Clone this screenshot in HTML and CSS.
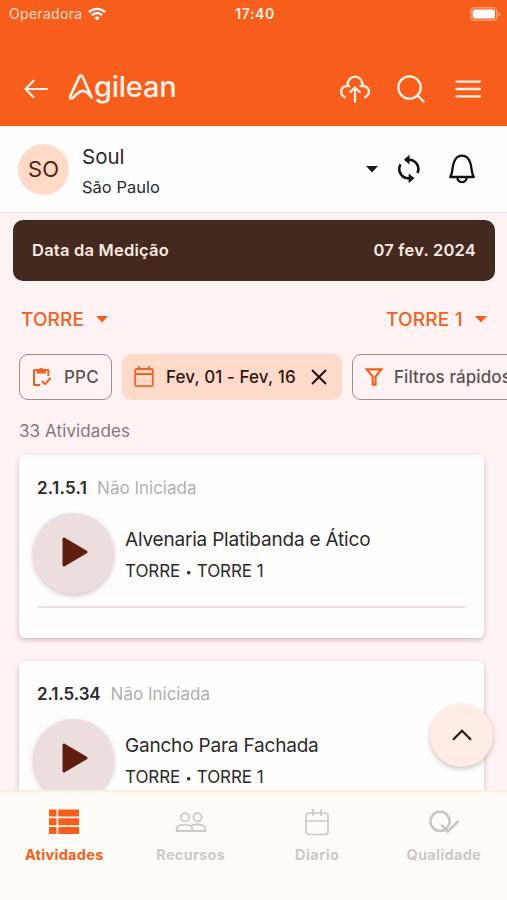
FILE: index.html
```html
<!DOCTYPE html>
<html lang="pt">
<head>
<meta charset="utf-8">
<title>Agilean</title>
<link rel="stylesheet" href="styles.css">
</head>
<body>
<header class="header">
  <div class="status">
    <div class="carrier"><span>Operadora</span>
      <svg width="18" height="14" viewBox="0 0 18 14" fill="none" stroke="#fff" stroke-width="2.2"><path d="M.9 5.1a11.6 11.6 0 0 1 16.2 0M3.8 8.2a7.5 7.5 0 0 1 10.4 0"/><path d="M9 13.6 6.3 10.8a3.9 3.9 0 0 1 5.4 0z" fill="#fff" stroke="none"/></svg>
    </div>
    <span class="clock">17:40</span>
    <div class="battery"><svg width="31" height="14" viewBox="0 0 31 14"><rect x=".8" y=".8" width="26" height="12.4" rx="3.6" fill="none" stroke="#fff" stroke-opacity=".4" stroke-width="1.5"/><rect x="2.6" y="2.6" width="22.4" height="8.8" rx="2" fill="#fff"/><path d="M28.5 4.8v4.4c1.2-.4 1.8-1.2 1.8-2.2s-.6-1.8-1.8-2.2z" fill="#fff" fill-opacity=".4"/></svg></div>
  </div>
  <div class="appbar">
    <svg class="back" width="26" height="20" viewBox="0 0 26 20" fill="none" stroke="#fff0e6" stroke-width="2.2" stroke-linecap="round" stroke-linejoin="round"><path d="M24 10H2.500M10.5 1.800 2.500 10l8 8.200"/></svg>
    <div class="logo">
      <svg width="26" height="28" viewBox="0 0 26 28" fill="none" stroke="#fff0e6" stroke-width="2.700" stroke-linecap="round" stroke-linejoin="round"><path d="M23.700 24.500 14.600 3.800Q13 1 11.300 3.800L2.100 23.300Q1.500 26 4.200 25.300C8 22.800 9.400 18.600 14 17.800Q18.500 17.400 23.700 24.500"/></svg>
      <span>gilean</span>
    </div>
    <div class="actions">
      <svg width="32" height="30" viewBox="0 0 32 30" fill="none" stroke="#fff0e6" stroke-width="2.300" stroke-linecap="round" stroke-linejoin="round"><path d="M5.800 23.200C.2 20 1 12.500 8.400 11.800 8.300-.4 23.700-.4 23.600 11.800 31 12.500 31.800 20 26.200 23.200M8.400 11.800l2 .4M23.600 11.800l-2 .4M16 27.800V14.500M11.300 18l4.700-4.500 4.700 4.500"/></svg>
      <svg width="30" height="30" viewBox="0 0 30 30" fill="none" stroke="#fff0e6" stroke-width="2.300" stroke-linecap="round"><circle cx="13.500" cy="13.500" r="11.200"/><path d="m21.500 21.500 6 6"/></svg>
      <svg width="28" height="20" viewBox="0 0 28 20" fill="none" stroke="#fff0e6" stroke-width="2.300" stroke-linecap="round"><path d="M2.500 2.600h23.500M2.500 10h23.500M2.500 17.300h23.500"/></svg>
    </div>
  </div>
</header>

<section class="project">
  <div class="avatar">SO</div>
  <div class="names"><div class="name">Soul</div><div class="city">São Paulo</div></div>
  <svg class="caret" width="12" height="7" viewBox="0 0 12 7"><path d="M0 0h12L6 6.400z" fill="#1c1b1b"/></svg>
  <svg class="sync" width="24" height="30" viewBox="0 0 24 30" fill="none" stroke="#151010" stroke-width="2.600"><path d="M11.500 5.700a9.300 9.300 0 0 1 8.900 13.300M3.600 10.300a9.300 9.300 0 0 0 8.900 14"/><path d="M12.500.8v9.800L6.800 5.700zM11.700 19.400v9.800l5.700-4.900z" fill="#151010" stroke="none"/></svg>
  <svg width="28" height="30" viewBox="0 0 28 30" fill="none" stroke="#151010" stroke-width="2.300" stroke-linejoin="round"><path d="M2.200 23h23.600C23.300 19.500 24 14 22.300 8.800 19.200-.8 8.800-.8 5.700 8.800 4 14 4.700 19.500 2.200 23zM9.300 23.300c.3 6.400 9.100 6.400 9.400 0"/></svg>
</section>

<main class="content">
  <div class="date"><span>Data da Medição</span><span>07 fev. 2024</span></div>
  <div class="selects">
    <div class="select"><span>TORRE</span><svg width="12" height="7" viewBox="0 0 12 7"><path d="M0 0h12L6 6.400z"/></svg></div>
    <div class="select wide"><span>TORRE 1</span><svg width="12" height="7" viewBox="0 0 12 7"><path d="M0 0h12L6 6.400z"/></svg></div>
  </div>
  <div class="chips">
    <div class="chip ppc"><svg width="20" height="20" viewBox="0 0 20 20" fill="none" stroke="#f85e1b" stroke-width="2"><path d="M8 18H2.500Q2 18 2 17.500V3.500Q2 3 2.500 3h13.400q.5 0 .5.500V9M9.800 14l3.100 3.100 5.800-6.200"/><path d="M4.800 2.400H7.200a2.200 2.200 0 0 1 4.200 0h2.400v4H4.800z" fill="#f85e1b" stroke="none"/></svg><span>PPC</span></div>
    <div class="chip period"><svg width="20" height="22" viewBox="0 0 20 22" fill="none" stroke="#f36427" stroke-width="1.800"><rect x="1.200" y="3" width="17.600" height="17.200" rx="1.500"/><path d="M1.200 8h17.600M5 0v3M15 0v3"/></svg><span>Fev, 01 - Fev, 16</span><svg class="close" width="16" height="16" viewBox="0 0 16 16" fill="none" stroke="#1d100c" stroke-width="1.900"><path d="m1 1 14 14M15 1 1 15"/></svg></div>
    <div class="chip filters"><svg width="18" height="18" viewBox="0 0 18 18" fill="none" stroke="#f85e1b" stroke-width="2.200"><path d="M1.700 1.400h14.600L10.500 8.600v8H7.700v-8z"/></svg><span>Filtros rápidos</span></div>
  </div>
  <div class="count">33 Atividades</div>
  <article class="card">
    <div class="meta"><b class="short">2.1.5.1</b><span>Não Iniciada</span></div>
    <div class="activity">
      <div class="play"><svg width="28" height="32" viewBox="0 0 28 32"><path d="M3 3v26L25 16z" fill="#5f1f10" stroke="#5f1f10" stroke-width="3" stroke-linejoin="round"/></svg></div>
      <div class="info"><div class="title">Alvenaria Platibanda e Ático</div><div class="place">TORRE <i>•</i> TORRE 1</div></div>
    </div>
    <div class="line"></div>
  </article>
  <article class="card">
    <div class="meta"><b>2.1.5.34</b><span>Não Iniciada</span></div>
    <div class="activity">
      <div class="play"><svg width="28" height="32" viewBox="0 0 28 32"><path d="M3 3v26L25 16z" fill="#5f1f10" stroke="#5f1f10" stroke-width="3" stroke-linejoin="round"/></svg></div>
      <div class="info"><div class="title">Gancho Para Fachada</div><div class="place">TORRE <i>•</i> TORRE 1</div></div>
    </div>
    <div class="line"></div>
  </article>
  <div class="fab"><svg width="20" height="12" viewBox="0 0 20 12" fill="none" stroke="#231a18" stroke-width="2.200"><path d="m1 10.800 9-9 9 9"/></svg></div>
</main>

<nav class="nav">
  <div class="tab active"><div class="icon"><svg width="30" height="26" viewBox="0 0 30 26" fill="#f85e1b"><path d="M0 .5h7.500v7H0zM9.300.5H30v7H9.300zM0 9.300h7.500v7H0zM9.300 9.300H30v7H9.300zM0 18.100h7.500v7H0zM9.300 18.100H30v7H9.300z"/></svg></div><span>Atividades</span></div>
  <div class="tab"><div class="icon"><svg width="32" height="22" viewBox="0 0 32 22" fill="none" stroke="#ccc8c5" stroke-width="1.800"><circle cx="10" cy="6.200" r="4.100"/><circle cx="22.500" cy="6.200" r="4.100"/><path d="M1.700 20V17.500C2.500 12.300 16 12.300 17.300 17.500V20zM16 14.800c4-2.600 13.500-1.800 14.300 2.700V20H17.300"/></svg></div><span>Recursos</span></div>
  <div class="tab diary"><div class="icon"><svg width="24" height="27" viewBox="0 0 24 27" fill="none" stroke="#ccc8c5" stroke-width="1.700"><rect x="1" y="4" width="22" height="21.500" rx="3"/><path d="M1 12h22M8 0v7M16 0v7"/></svg></div><span>Diario</span></div>
  <div class="tab"><div class="icon"><svg width="32" height="24" viewBox="0 0 32 24" fill="none" stroke="#c8c4c1" stroke-width="2.500"><circle cx="12" cy="11.300" r="9.600"/><path d="m13.500 14.800 6.300 6.800L30.500 11"/></svg></div><span>Qualidade</span></div>
</nav>
</body>
</html>
```
FILE: styles.css
```css
* { box-sizing: border-box; }
body {
  margin: 0;
  height: 900px;
  overflow: hidden;
  display: flex;
  flex-direction: column;
  background: #fff2f2;
  font-family: Inter, sans-serif;
  color: #2b2a2b;
}
svg { display: block; flex: none; }
span, b, .title, .place, .name, .city { white-space: nowrap; }

.header { height: 126px; flex: none; background: #f85e1b; color: #fff0e6; }
.status { display: grid; grid-template-columns: 1fr auto 1fr; align-items: center; height: 27px; padding: 0 6px 0 9px; }
.carrier { display: flex; align-items: center; gap: 6px; font-size: 14px; letter-spacing: .3px; color: #ffdccb; }
.clock { font-size: 14px; font-weight: 600; letter-spacing: .6px; }
.battery { display: flex; justify-content: flex-end; }
.appbar { display: flex; align-items: center; height: 99px; padding: 25px 25px 0 23px; }
.logo { display: flex; align-items: center; margin: -4px 0 0 19px; }
.logo span { font-size: 29px; font-weight: 500; letter-spacing: -.24px; line-height: 32px; }
.actions { display: flex; align-items: center; gap: 25px; margin-left: auto; }
.actions svg:last-child { margin-left: 3px; }

.project { display: flex; align-items: center; height: 87px; flex: none; padding: 0 31px 0 18px; background: #fffefe; border-bottom: 1px solid #ece4e5; }
.avatar { width: 51px; height: 51px; border-radius: 50%; background: #ffdac9; color: #571e10; font-size: 22px; font-weight: 400; display: flex; align-items: center; justify-content: center; }
.names { margin-left: 13px; padding-top: 5px; }
.name { font-size: 20.5px; line-height: 30px; }
.city { font-size: 16.5px; line-height: 30px; }
.caret { margin-left: auto; }
.sync { margin: 0 27px 0 19px; }

.content { position: relative; flex: 1; min-height: 0; overflow: hidden; padding-top: 7px; }
.date { display: flex; justify-content: space-between; align-items: center; height: 61px; margin: 0 12px 0 13px; padding: 0 19px 2px; border-radius: 10px; background: #442921; color: #fbe9e0; font-size: 16.5px; font-weight: 600; letter-spacing: .22px; }
.selects { display: flex; justify-content: space-between; margin: 23px 20px 0 21px; height: 30px; }
.select { display: flex; align-items: center; gap: 12px; color: #ee6428; font-size: 19px; font-weight: 500; letter-spacing: .1px; }
.wide { letter-spacing: .24px; }
.select svg { fill: #f85e1b; }
.chips { display: flex; gap: 10px; margin: 20px 0 0 19px; }
.chip { display: flex; align-items: center; flex: none; height: 46px; border-radius: 9px; font-size: 17px; font-weight: 500; color: #5c5352; }
.chip.ppc { width: 93px; border: 1.500px solid #978e8e; padding-left: 12px; gap: 12px; letter-spacing: .2px; }
.chip.period { width: 220px; background: #ffdacb; color: #321610; padding-left: 12px; gap: 12px; letter-spacing: .1px; }
.close { margin-left: 3px; }
.chip.filters { width: 180px; border: 1.500px solid #978e8e; padding-left: 12px; gap: 11px; letter-spacing: .08px; }
.count { margin: 20px 0 0 19px; font-size: 17px; line-height: 22px; letter-spacing: .1px; color: #857878; }

.card { width: 465px; height: 183px; margin: 13px 0 0 19px; padding: 22px 19px 0 18px; border-radius: 6px; background: #fffefd; box-shadow: 0 2px 5px rgba(70, 40, 40, .26); }
.card + .card { margin-top: 23px; }
.meta { display: flex; gap: 10px; font-size: 17px; line-height: 22px; }
.meta b { font-weight: 600; letter-spacing: -.1px; }
.meta .short { letter-spacing: .25px; }
.meta span { color: #b1aeae; }
.activity { display: flex; align-items: center; margin: 14px 0 0 -4px; }
.play { width: 81px; height: 81px; flex: none; padding-left: 2px; border-radius: 50%; background: #ecdedc; box-shadow: 0 2px 5px rgba(60, 30, 30, .25); display: flex; align-items: center; justify-content: center; }
.play svg { margin-top: -4px; }
.info { margin-left: 11px; padding-top: 3px; }
.title { font-size: 19px; line-height: 32px; letter-spacing: -.2px; }
.place { font-size: 17px; line-height: 31px; letter-spacing: -.06px; }
.place i { display: inline-block; width: 7px; font-size: 11px; font-style: normal; line-height: 1; text-align: center; vertical-align: 1px; }
.line { height: 1.500px; margin-top: 12px; background: #efdfdf; }
.fab { position: absolute; right: 14px; bottom: 23px; width: 63px; height: 63px; border-radius: 50%; background: #ffece6; box-shadow: 0 2px 5px rgba(60, 30, 30, .28); display: flex; align-items: center; justify-content: center; }
.fab svg { margin-top: -2px; }

.nav { display: grid; grid-template-columns: repeat(4, 126.500px); height: 110px; flex: none; padding-left: 1px; background: #fffcf8; border-top: 2px solid #fdeee1; }
.tab { display: flex; flex-direction: column; align-items: center; color: #ccc8c5; font-size: 14.500px; font-weight: 700; letter-spacing: .3px; }
.icon { height: 30px; margin: 15px 0 8px; display: flex; align-items: center; }
.tab span { line-height: 20px; }
.active { color: #f85e1b; }
.diary span { letter-spacing: .47px; }
```
